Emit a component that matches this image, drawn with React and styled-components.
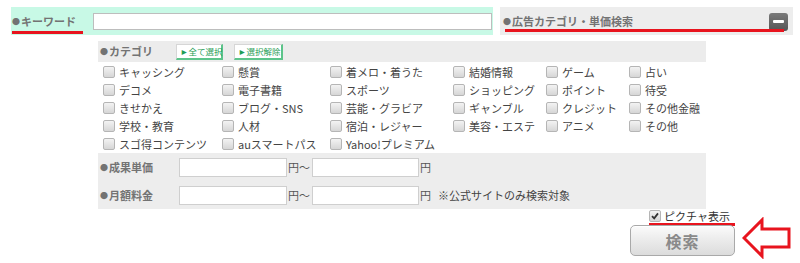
import React from 'react';
import styled, { createGlobalStyle } from 'styled-components';

const GlobalStyle = createGlobalStyle`
  html, body {
    margin: 0;
    padding: 0;
    background: #fff;
  }
  body {
    font-family: "Noto Sans CJK JP", "Noto Sans", sans-serif;
    font-size: 11px;
    color: #444;
  }
`;

const Page = styled.div`
  width: 800px;
  height: 263px;
  padding: 7px 0 0 11px;
  box-sizing: border-box;
  overflow: hidden;
`;

const TopRow = styled.div`
  display: flex;
  gap: 7px;
  height: 28px;
`;

const KeywordBar = styled.div`
  display: flex;
  align-items: center;
  width: 482px;
  background: #c8f9e6;
  padding-left: 1px;
  box-sizing: border-box;
`;

const Heading = styled.span`
  font-weight: bold;
  color: #737373;
  font-size: 11px;
  line-height: 14px;
  white-space: nowrap;
`;

const Dot = styled.span`
  font-size: 8px;
  vertical-align: 1px;
  margin-right: 1px;
`;

const Marked = styled(Heading)`
  padding-bottom: 2px;
  border-bottom: 3px solid #e8141e;
  margin-top: 5px;
  width: ${({ $w }) => $w}px;
`;

const KeywordInput = styled.input`
  margin-left: 10px;
  width: 399px;
  height: 17px;
  border: 1px solid #bdbdbd;
  padding: 0 3px;
  box-sizing: border-box;
  outline: none;
`;

const ToggleBar = styled.div`
  position: relative;
  display: flex;
  align-items: center;
  justify-content: space-between;
  width: 293px;
  background: #ededed;
  padding: 0 5px 0 3px;
  box-sizing: border-box;

  &::after {
    content: '';
    position: absolute;
    left: 5px;
    top: 22px;
    width: 279px;
    height: 3px;
    background: #e8141e;
  }
`;

const MinusButton = styled.button`
  width: 19px;
  height: 18px;
  padding: 0;
  border: none;
  border-radius: 3px;
  background: linear-gradient(#7a7a7a, #555);
  display: flex;
  align-items: center;
  justify-content: center;
  margin-top: 1px;

  &::before {
    content: '';
    width: 11px;
    height: 3px;
    background: #fff;
    border-radius: 1px;
  }
`;

const Panel = styled.div`
  margin: 6px 0 0 87px;
  width: 608px;
`;

const PanelHeader = styled.div`
  display: flex;
  align-items: center;
  height: 21px;
  background: #ececec;
  padding-left: 2px;
`;

const SmallButton = styled.button`
  margin-left: ${({ $gap }) => $gap}px;
  height: 16px;
  width: ${({ $w }) => $w}px;
  padding: 0 0 0 3px;
  font-family: inherit;
  font-size: 8.5px;
  color: #1f9d55;
  background: #fff;
  border: 1px solid #d6d6d6;
  border-right: 2px solid #5cc48a;
  border-bottom: 2px solid #5cc48a;
  text-align: left;
  white-space: nowrap;
`;

const CategoryGrid = styled.div`
  display: grid;
  grid-template-columns: 119px 108px 123px 93px 83px 1fr;
  grid-auto-rows: 18px;
  padding: 1px 0 0 5px;
`;

const CheckItem = styled.label`
  display: flex;
  align-items: center;
  gap: 4px;
  white-space: nowrap;
  color: #444;
  font-size: 11px;
`;

const Box = styled.span`
  flex: none;
  width: 10px;
  height: 10px;
  border: 1px solid #b5b5b5;
  border-radius: 2px;
  background: linear-gradient(#f3f3f3, #d6d6d6);
  display: flex;
  align-items: center;
  justify-content: center;
`;

const PriceTable = styled.div`
  background: #ededed;
`;

const PriceRow = styled.div`
  display: flex;
  align-items: center;
  height: 28px;
  color: #555;
`;

const PriceLabel = styled(Heading)`
  width: 81px;
  padding-left: 2px;
  box-sizing: border-box;
`;

const PriceInput = styled.input`
  width: ${({ $w }) => $w}px;
  height: 19px;
  border: 1px solid #cfcfcf;
  background: #fff;
  box-sizing: border-box;
  outline: none;
`;

const Unit = styled.span`
  padding: 0 2px 0 1px;
`;

const Note = styled.span`
  margin-left: 5px;
  color: #444;
`;

const PictureRow = styled.div`
  margin: 0 0 0 638px;
  width: 86px;
  height: 14px;
  display: flex;
  align-items: center;
  border-bottom: 3px solid #e8141e;
`;

const PictureLabel = styled(CheckItem)`
  gap: 3px;
  color: #333;
`;

const ActionRow = styled.div`
  display: flex;
  align-items: flex-start;
  margin: 0 0 0 619px;
`;

const SearchButton = styled.button`
  width: 105px;
  height: 31px;
  margin-top: -1px;
  border: 1px solid #a9a9a9;
  border-radius: 5px;
  background: linear-gradient(#fbfbfb, #e9e9e9 55%, #dcdcdc);
  box-shadow: inset 0 1px 0 #fff;
  font-family: inherit;
  font-size: 16px;
  font-weight: bold;
  color: #8a8a8a;
  letter-spacing: 1px;
  padding: 0;
`;

const Arrow = styled.svg`
  margin-left: 7px;
  margin-top: -9px;
`;

const categories = [
  ['キャッシング', '懸賞', '着メロ・着うた', '結婚情報', 'ゲーム', '占い'],
  ['デコメ', '電子書籍', 'スポーツ', 'ショッピング', 'ポイント', '待受'],
  ['きせかえ', 'ブログ・SNS', '芸能・グラビア', 'ギャンブル', 'クレジット', 'その他金融'],
  ['学校・教育', '人材', '宿泊・レジャー', '美容・エステ', 'アニメ', 'その他'],
  ['スゴ得コンテンツ', 'auスマートパス', 'Yahoo!プレミアム'],
];

const App = () => {
  return (
    <Page>
      <GlobalStyle />
      <TopRow>
        <KeywordBar>
          <Marked $w={71}><Dot>●</Dot>キーワード</Marked>
          <KeywordInput type="text" />
        </KeywordBar>
        <ToggleBar>
          <Heading><Dot>●</Dot>広告カテゴリ・単価検索</Heading>
          <MinusButton aria-label="閉じる" />
        </ToggleBar>
      </TopRow>

      <Panel>
        <PanelHeader>
          <Heading><Dot>●</Dot>カテゴリ</Heading>
          <SmallButton $gap={23} $w={47}>►全て選択</SmallButton>
          <SmallButton $gap={11} $w={49}>►選択解除</SmallButton>
        </PanelHeader>

        <CategoryGrid>
          {categories.flat().map((name) => (
            <CheckItem key={name}>
              <Box />
              {name}
            </CheckItem>
          ))}
        </CategoryGrid>

        <PriceTable>
          <PriceRow>
            <PriceLabel><Dot>●</Dot>成果単価</PriceLabel>
            <PriceInput type="text" $w={108} />
            <Unit>円～</Unit>
            <PriceInput type="text" $w={107} />
            <Unit>円</Unit>
          </PriceRow>
          <PriceRow>
            <PriceLabel><Dot>●</Dot>月額料金</PriceLabel>
            <PriceInput type="text" $w={108} />
            <Unit>円～</Unit>
            <PriceInput type="text" $w={107} />
            <Unit>円</Unit>
            <Note>※公式サイトのみ検索対象</Note>
          </PriceRow>
        </PriceTable>
      </Panel>

      <PictureRow>
        <PictureLabel>
          <Box>
            <svg width="8" height="8" viewBox="0 0 8 8">
              <path d="M1 4.2 L3.2 6.4 L7 1.4" fill="none" stroke="#333" strokeWidth="1.8" />
            </svg>
          </Box>
          ピクチャ表示
        </PictureLabel>
      </PictureRow>

      <ActionRow>
        <SearchButton>検索</SearchButton>
        <Arrow width="50" height="42" viewBox="0 0 50 42">
          <path
            d="M2 21 L20 3 L20 12 L47 12 L47 30 L20 30 L20 39 Z"
            fill="#fff"
            stroke="#e8141e"
            strokeWidth="3"
            strokeLinejoin="miter"
          />
        </Arrow>
      </ActionRow>
    </Page>
  );
};

export default App;
